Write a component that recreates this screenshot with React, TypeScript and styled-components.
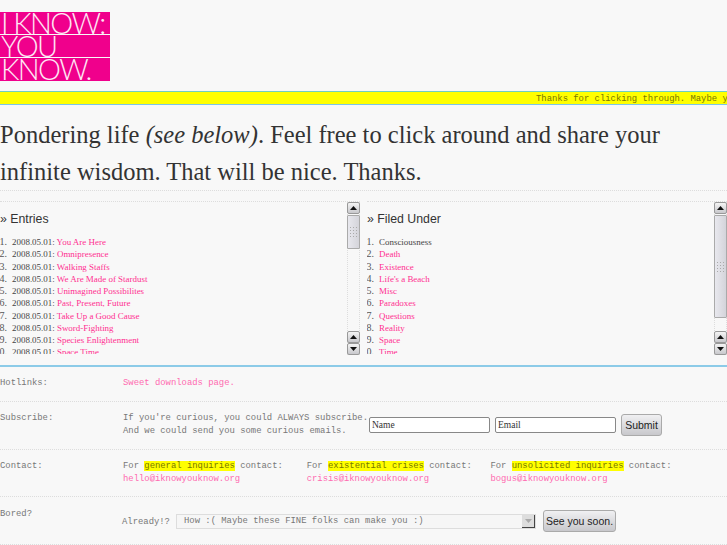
import styled, { createGlobalStyle } from "styled-components";

const GlobalStyle = createGlobalStyle`
    html, body {
        margin: 0;
        padding: 0;
        height: 100%;
        overflow: hidden;
        background: #f8f8f8;
    }
`;

const Page = styled.div`
    width: 727px;
    height: 545px;
    overflow: hidden;
    color: #777;
    font-family: "Liberation Mono", monospace;
    font-size: 8.9px;
`;

const Logo = styled.div`
    width: 110px;
    margin-top: 12px;
    display: flex;
    flex-direction: column;
    gap: 1px;
`;

const LogoLine = styled.div<{ $height: number }>`
    height: ${(p) => p.$height}px;
    overflow: hidden;
    padding-left: 1px;
    background: #f0008c;
    color: #ffe6f4;
    font-family: Lato, sans-serif;
    font-weight: 300;
    font-size: 29px;
    line-height: 22px;
    letter-spacing: -1.6px;
    white-space: nowrap;
`;

const Ticker = styled.div`
    margin-top: 10px;
    height: 12px;
    padding-left: 536px;
    background: #ffff00;
    border-top: 1px solid #6fcfc0;
    border-bottom: 1px solid #7cc4e8;
    overflow: hidden;
    white-space: nowrap;
    line-height: 14px;
    color: #777700;
`;

const Intro = styled.h1`
    margin: 11px 0 0;
    font-family: "Liberation Serif", serif;
    font-weight: 400;
    font-size: 24.5px;
    line-height: 37px;
    color: #333;
    white-space: nowrap;
`;

const Columns = styled.div`
    padding-top: 10px;
    border-top: 1px dotted #ddd;
    display: flex;
    gap: 7px;
`;

const Panel = styled.section`
    flex: 0 0 360px;
    height: 154px;
    display: flex;
    border-top: 1px dotted #ddd;
    box-sizing: border-box;
`;

const PanelBody = styled.div`
    flex: 1;
    height: 152px;
    overflow: hidden;
`;

const PanelTitle = styled.h2`
    margin: 10px 0 9px;
    font-family: "Liberation Sans", sans-serif;
    font-weight: 400;
    font-size: 12.3px;
    line-height: 15px;
    color: #333;
`;

const EntryList = styled.ol`
    margin: 0;
    padding: 0 0 0 12px;
    font-family: "Liberation Serif", serif;
    font-size: 8.95px;
    line-height: 12.25px;
    color: #444;

    li::marker {
        content: counter(list-item) ".  ";
        font-size: 10px;
        color: #555;
    }
`;

const EntryLink = styled.a`
    color: #ff2f90;
    text-decoration: none;
`;

const Scrollbar = styled.div`
    flex: 0 0 13px;
    display: flex;
    flex-direction: column;
    border-left: 1px dotted #ddd;
    border-right: 1px dotted #ddd;
    box-sizing: border-box;
`;

const ScrollButton = styled.div`
    flex: 0 0 12px;
    margin: 0 -1px;
    display: flex;
    align-items: center;
    justify-content: center;
    background: linear-gradient(#f4f4f4, #c8c8cc);
    border: 1px solid #999;
    border-radius: 2px;
    box-sizing: border-box;
`;

const Thumb = styled.div<{ $height: number }>`
    flex: 0 0 ${(p) => p.$height}px;
    margin: 1px -1px 0;
    display: flex;
    align-items: center;
    justify-content: center;
    background: linear-gradient(90deg, #e8e8ee, #d4d4da);
    border: 1px solid #aaa;
    border-radius: 1px;
    box-sizing: border-box;
`;

const Grip = styled.div`
    width: 9px;
    height: 12px;
    background-image: radial-gradient(#aaa 0.6px, transparent 0.7px);
    background-size: 3px 3px;
`;

const TrackGap = styled.div`
    flex: 1;
`;

const Rows = styled.div`
    border-top: 2px solid #8ccbe8;
    margin-top: 10px;
`;

const Row = styled.div<{ $height: number; $top: number }>`
    display: flex;
    height: ${(p) => p.$height}px;
    padding-top: ${(p) => p.$top}px;
    box-sizing: border-box;
    border-bottom: 1px dotted #ddd;
    line-height: 12.5px;
`;

const RowLabel = styled.div`
    flex: 0 0 123px;
`;

const RowContent = styled.div`
    flex: 1;
    display: flex;
    min-width: 0;
`;

const PinkLink = styled.a`
    color: #ff6ab0;
    text-decoration: none;
`;

const SubscribeText = styled.div`
    flex: 0 0 246px;
    white-space: nowrap;
`;

const TextInput = styled.input`
    width: 121px;
    height: 16px;
    margin: 5px 5px 0 0;
    padding: 0 0 0 2px;
    box-sizing: border-box;
    background: #fff;
    border: 1px solid #888;
    border-radius: 2px;
    font-family: "Liberation Serif", serif;
    font-size: 9.5px;
    color: #333;
    &::placeholder {
        color: #333;
        opacity: 1;
    }
`;

const GreyButton = styled.button<{ $width: number }>`
    width: ${(p) => p.$width}px;
    height: 22px;
    padding: 0;
    background: linear-gradient(#f0f0f2, #c8c8cc);
    border: 1px solid #aaa;
    border-radius: 3px;
    font-family: "Liberation Sans", sans-serif;
    font-size: 10.5px;
    color: #222;
`;

const SubmitSlot = styled.div`
    margin-top: 2px;
`;

const ContactColumn = styled.div`
    flex: 0 0 183.7px;
    white-space: nowrap;
`;

const Highlight = styled.span`
    background: #ffff00;
    color: #777700;
`;

const BoredContent = styled.div`
    flex: 1;
    display: flex;
    align-items: center;
    margin-top: 2px;
    height: 22px;
`;

const AlreadyText = styled.span`
    flex: 0 0 54px;
    margin-left: -1px;
    padding-top: 2px;
`;

const FakeSelect = styled.div`
    width: 360px;
    height: 15px;
    margin-right: 7px;
    padding: 1px 0 0 7px;
    box-sizing: border-box;
    display: flex;
    align-items: center;
    justify-content: space-between;
    background: #f6f6f6;
    border: 1px solid #ddd;
    white-space: nowrap;
`;

const SelectArrow = styled.div`
    width: 13px;
    height: 13px;
    margin-top: -1px;
    display: flex;
    align-items: center;
    justify-content: center;
    background: #ddd;
    border-right: 1px solid #444;
    border-bottom: 1px solid #444;
    box-sizing: border-box;
`;

const entries = [
    "You Are Here",
    "Omnipresence",
    "Walking Staffs",
    "We Are Made of Stardust",
    "Unimagined Possibilites",
    "Past, Present, Future",
    "Take Up a Good Cause",
    "Sword-Fighting",
    "Species Enlightenment",
    "Space Time",
];

const topics = [
    "Death",
    "Existence",
    "Life's a Beach",
    "Misc",
    "Paradoxes",
    "Questions",
    "Reality",
    "Space",
    "Time",
];

function Arrow({ down }: { down?: boolean }) {
    return (
        <svg width="7" height="4" viewBox="0 0 7 4">
            <path d={down ? "M0 0h7L3.5 4z" : "M0 4h7L3.5 0z"} fill="#111" />
        </svg>
    );
}

function Bar({ thumb }: { thumb: number }) {
    return (
        <Scrollbar>
            <ScrollButton>
                <Arrow />
            </ScrollButton>
            <Thumb $height={thumb}>
                <Grip />
            </Thumb>
            <TrackGap />
            <ScrollButton>
                <Arrow />
            </ScrollButton>
            <ScrollButton>
                <Arrow down />
            </ScrollButton>
        </Scrollbar>
    );
}

export default function App() {
    return (
        <Page>
            <GlobalStyle />
            <Logo>
                <LogoLine $height={22}>I KNOW:</LogoLine>
                <LogoLine $height={22}>YOU</LogoLine>
                <LogoLine $height={23}>KNOW.</LogoLine>
            </Logo>

            <Ticker>Thanks for clicking through. Maybe you'll stay a while.</Ticker>

            <Intro>
                Pondering life <em>(see below)</em>. Feel free to click around and share your
                <br />
                infinite wisdom. That will be nice. Thanks.
            </Intro>

            <Columns>
                <Panel>
                    <PanelBody>
                        <PanelTitle>» Entries</PanelTitle>
                        <EntryList>
                            {entries.map((title) => (
                                <li key={title}>
                                    2008.05.01: <EntryLink href="#">{title}</EntryLink>
                                </li>
                            ))}
                        </EntryList>
                    </PanelBody>
                    <Bar thumb={34} />
                </Panel>
                <Panel>
                    <PanelBody>
                        <PanelTitle>» Filed Under</PanelTitle>
                        <EntryList>
                            <li>Consciousness</li>
                            {topics.map((title) => (
                                <li key={title}>
                                    <EntryLink href="#">{title}</EntryLink>
                                </li>
                            ))}
                        </EntryList>
                    </PanelBody>
                    <Bar thumb={103} />
                </Panel>
            </Columns>

            <Rows>
                <Row $height={35} $top={10}>
                    <RowLabel>Hotlinks:</RowLabel>
                    <RowContent>
                        <PinkLink href="#">Sweet downloads page.</PinkLink>
                    </RowContent>
                </Row>
                <Row $height={48} $top={10}>
                    <RowLabel>Subscribe:</RowLabel>
                    <RowContent>
                        <SubscribeText>
                            If you're curious, you could ALWAYS subscribe.
                            <br />
                            And we could send you some curious emails.
                        </SubscribeText>
                        <TextInput placeholder="Name" />
                        <TextInput placeholder="Email" />
                        <SubmitSlot>
                            <GreyButton $width={41}>Submit</GreyButton>
                        </SubmitSlot>
                    </RowContent>
                </Row>
                <Row $height={47} $top={10}>
                    <RowLabel>Contact:</RowLabel>
                    <RowContent>
                        <ContactColumn>
                            For <Highlight>general inquiries</Highlight> contact:
                            <br />
                            <PinkLink href="#">hello@iknowyouknow.org</PinkLink>
                        </ContactColumn>
                        <ContactColumn>
                            For <Highlight>existential crises</Highlight> contact:
                            <br />
                            <PinkLink href="#">crisis@iknowyouknow.org</PinkLink>
                        </ContactColumn>
                        <ContactColumn>
                            For <Highlight>unsolicited inquiries</Highlight> contact:
                            <br />
                            <PinkLink href="#">bogus@iknowyouknow.org</PinkLink>
                        </ContactColumn>
                    </RowContent>
                </Row>
                <Row $height={48} $top={11}>
                    <RowLabel>Bored?</RowLabel>
                    <BoredContent>
                        <AlreadyText>Already!?</AlreadyText>
                        <FakeSelect>
                            How :( Maybe these FINE folks can make you :)
                            <SelectArrow>
                                <svg width="7" height="4" viewBox="0 0 7 4">
                                    <path d="M0 0h7L3.5 4z" fill="#aaa" />
                                </svg>
                            </SelectArrow>
                        </FakeSelect>
                        <GreyButton $width={73}>See you soon.</GreyButton>
                    </BoredContent>
                </Row>
            </Rows>
        </Page>
    );
}
